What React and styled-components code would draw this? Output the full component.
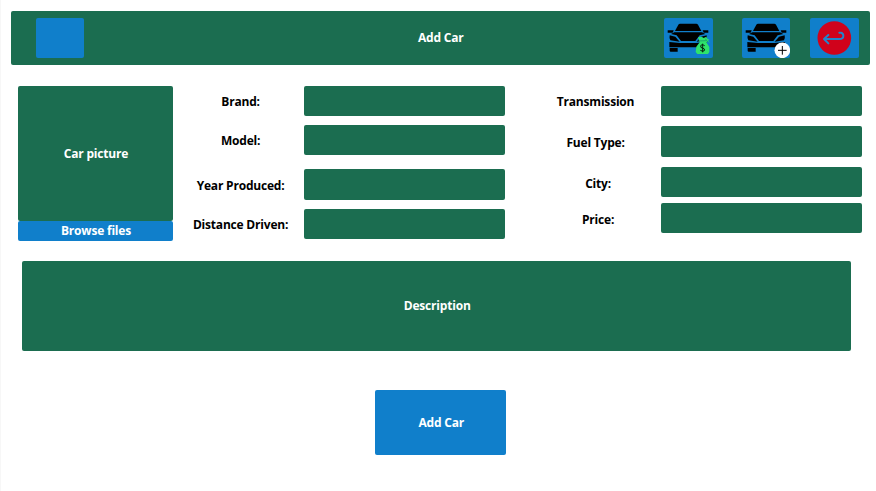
import React from "react";
import styled, { createGlobalStyle } from "styled-components";

const GREEN = "#1b6d50";
const BLUE = "#107fcb";

const GlobalStyle = createGlobalStyle`
  * { box-sizing: border-box; }
  body { margin: 0; background: #fff; }
`;

const Page = styled.main`
  width: 876px;
  height: 491px;
  overflow: hidden;
  border-left: 1px solid #f7f7f7;
  padding: 11px 6px 0 9.6px;
  font: 700 12px/16px "Open Sans", "Noto Sans", sans-serif;
  letter-spacing: -0.2px;
  color: #000;
`;

const Header = styled.header`
  display: grid;
  grid-template-columns: 1fr auto 1fr;
  align-items: center;
  width: 859px;
  height: 54px;
  padding: 0 11px 0 25.4px;
  border-radius: 2px;
  background: ${GREEN};
`;

const Title = styled.h1`
  margin: 0 0 0 -13px;
  font: inherit;
  color: #fff;
`;

const Actions = styled.nav`
  display: flex;
  justify-content: flex-end;
`;

const IconButton = styled.button`
  display: block;
  width: 48.4px;
  height: 40px;
  margin: 0 0 0 ${(p) => p.$gap || 0}px;
  padding: 0;
  border: 0;
  border-radius: 2px;
  background: ${BLUE};

  svg { display: block; width: 48px; height: 40px; }
`;

const Details = styled.section`
  display: flex;
  align-items: flex-start;
  margin: 20.6px 0 0 7.4px;
`;

const Picture = styled.div`
  width: 155px;
`;

const PictureBox = styled.div`
  display: flex;
  align-items: center;
  justify-content: center;
  height: 135.4px;
  padding: 1px 0 0 1px;
  border-radius: 2px;
  background: ${GREEN};
  color: #fff;
`;

const BrowseButton = styled.button`
  display: block;
  width: 100%;
  height: 20px;
  padding: 0 0 0 1px;
  border: 0;
  border-radius: 2px;
  background: ${BLUE};
  color: #fff;
  font: inherit;
  letter-spacing: inherit;
`;

const Fields = styled.div`
  width: ${(p) => p.$width}px;
  margin-left: ${(p) => p.$left}px;
  padding-top: 0.3px;
`;

const Field = styled.label`
  display: grid;
  grid-template-columns: 1fr 200.6px;
  align-items: center;
  margin-top: ${(p) => p.$gap}px;
`;

const FieldName = styled.span`
  padding-top: ${(p) => p.$drop || 2}px;
  padding-left: ${(p) => p.$indent || 0}px;
  text-align: center;
  white-space: nowrap;
`;

const Input = styled.input`
  width: 100%;
  height: 30.4px;
  border: 0;
  border-radius: 2px;
  outline: 0;
  background: ${GREEN};
  color: #fff;
`;

const Description = styled.section`
  display: flex;
  align-items: center;
  justify-content: center;
  width: 829px;
  height: 90px;
  margin: 20.3px 0 0 11.6px;
  padding-left: 1px;
  border-radius: 2px;
  background: ${GREEN};
  color: #fff;
`;

const SubmitButton = styled.button`
  display: block;
  width: 130.6px;
  height: 64.4px;
  margin: 39.2px 0 0 364.8px;
  padding: 0 0 0 1px;
  border: 0;
  border-radius: 2px;
  background: ${BLUE};
  color: #fff;
  font: inherit;
  letter-spacing: inherit;
`;

const Car = () => (
  <g>
    <path d="M48 17H97Q100 17 102 20L112 39H33L43 20Q45 17 48 17Z" />
    <path d="M11 37H29L26 44H11Z" />
    <path d="M116 37H133V44H119Z" />
    <path d="M31 43H114L124 48L107 52L94 69H51L38 52L21 48Z" />
    <path d="M17 52L34 56L47 71L19 67Q15 60 17 52Z" />
    <path d="M128 52L111 56L98 71L126 67Q130 60 128 52Z" />
    <path d="M16 72L48 75H97L129 72V88H16Z" />
    <path d="M17 90H41V101H20Q17 101 17 98Z" />
    <path d="M104 90H128V98Q128 101 125 101H104Z" />
  </g>
);

const SellCarIcon = () => (
  <svg viewBox="0 0 144 120" aria-hidden="true">
    <Car />
    <path d="M102 58L113 56L119 60L127 56L130 62L136 65L132 68L138 76L130 70L128 74L136 87V102L132 108H100L95 102L97 86L107 73Z" fill="#2fe36b" />
    <path d="M102 69L127 68M124 62L132 73" fill="none" stroke="#128b69" strokeWidth="2" />
    <path d="M122 83Q112 77 110 84Q109 90 116 90Q124 92 121 98Q117 102 109 97M116 77V103" fill="none" stroke="#06230f" strokeWidth="3" />
  </svg>
);

const AddCarIcon = () => (
  <svg viewBox="0 0 144 120" aria-hidden="true">
    <Car />
    <circle cx="121" cy="97" r="23.5" fill="#fff" />
    <path d="M121 84V110M108 97H134" fill="none" stroke="#000" strokeWidth="3" />
  </svg>
);

const ReturnIcon = () => (
  <svg viewBox="0 0 144 120" aria-hidden="true">
    <circle cx="73" cy="60" r="50.5" fill="#d0021b" />
    <path d="M88 44H93Q100 46 100 53Q100 63 88 63H43M55 51L42 63L55 76" fill="none" stroke="#2385cb" strokeWidth="6" strokeLinecap="round" strokeLinejoin="round" />
  </svg>
);

const vehicleFields = [
  { name: "Brand:", gap: 0 },
  { name: "Model:", gap: 8.5 },
  { name: "Year Produced:", gap: 14.2 },
  { name: "Distance Driven:", gap: 8.9 },
];

const saleFields = [
  { name: "Transmission", gap: 0 },
  { name: "Fuel Type:", gap: 10.2 },
  { name: "City:", gap: 10.2, indent: 5, drop: 4 },
  { name: "Price:", gap: 5.6, indent: 5, drop: 4 },
];

const FieldGroup = ({ fields, width, left }) => (
  <Fields $width={width} $left={left}>
    {fields.map((f) => (
      <Field key={f.name} $gap={f.gap}>
        <FieldName $indent={f.indent} $drop={f.drop}>{f.name}</FieldName>
        <Input />
      </Field>
    ))}
  </Fields>
);

export default function App() {
  return (
    <Page>
      <GlobalStyle />
      <Header>
        <IconButton aria-label="Menu" />
        <Title>Add Car</Title>
        <Actions>
          <IconButton aria-label="Sell car"><SellCarIcon /></IconButton>
          <IconButton $gap={29} aria-label="Add car"><AddCarIcon /></IconButton>
          <IconButton $gap={20.2} aria-label="Back"><ReturnIcon /></IconButton>
        </Actions>
      </Header>
      <Details>
        <Picture>
          <PictureBox>Car picture</PictureBox>
          <BrowseButton>Browse files</BrowseButton>
        </Picture>
        <FieldGroup fields={vehicleFields} width={327.4} left={4.2} />
        <FieldGroup fields={saleFields} width={332} left={25.3} />
      </Details>
      <Description>Description</Description>
      <SubmitButton>Add Car</SubmitButton>
    </Page>
  );
}
